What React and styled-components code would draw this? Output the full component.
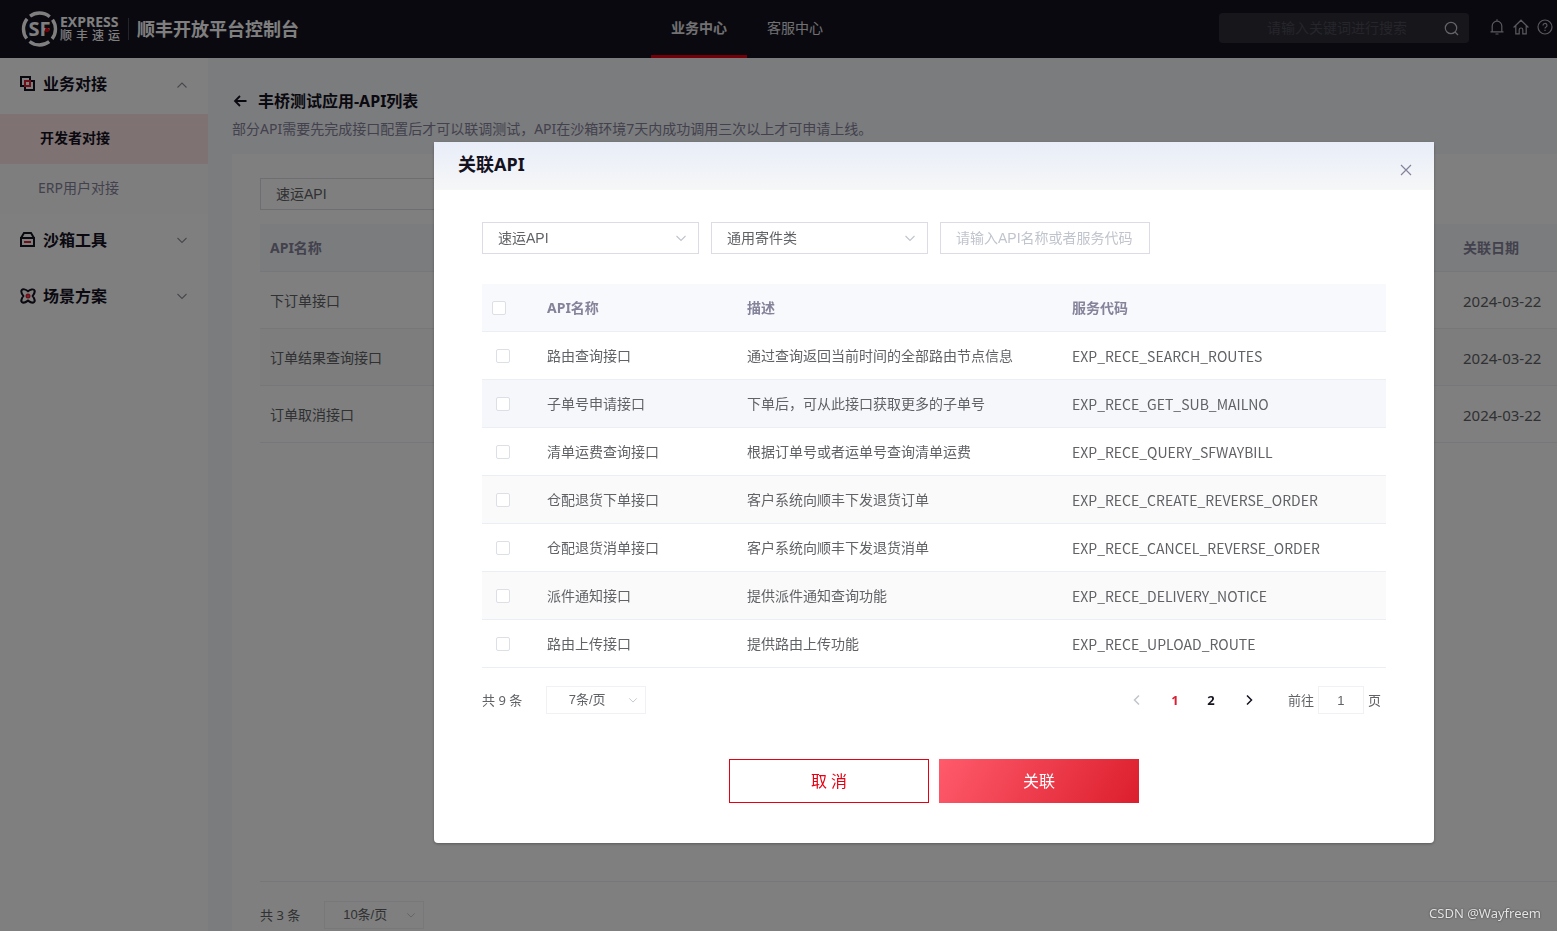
import React from "react";
import styled, { createGlobalStyle, css } from "styled-components";

const sans = `"Noto Sans", "Noto Sans CJK SC", sans-serif`;
const control = `"Liberation Sans", "Noto Sans CJK SC", sans-serif`;

const GlobalStyle = createGlobalStyle`
  *, *::before, *::after { box-sizing: border-box; }
  html, body, #root { height: 100%; }
  body {
    margin: 0;
    overflow: hidden;
    background: #f7f8fc;
    color: #606266;
    font-family: ${sans};
    font-size: 14px;
    line-height: 20px;
  }
  h1, h2, p { margin: 0; }
  button, input, select { font: inherit; color: inherit; margin: 0; border-radius: 0; }
  button { cursor: pointer; }
  a { color: inherit; text-decoration: none; }
`;

/* ---------- page frame ---------- */

const Page = styled.div`
  display: flex;
  flex-direction: column;
  height: 100vh;
`;

const Header = styled.header`
  display: flex;
  align-items: center;
  flex: none;
  height: 58px;
  padding: 0 4px 0 20px;
  background: #14121f;
  color: #fff;
`;

const Brand = styled.a`
  display: flex;
  align-items: center;
  width: 631px;
`;

const BrandWords = styled.span`
  display: flex;
  flex-direction: column;
  width: 60px;
  margin-left: 2px;
`;

const BrandLatin = styled.span`
  font: 700 14px/14px "Open Sans", sans-serif;
`;

const BrandHan = styled.span`
  font-size: 12px;
  font-weight: 500;
  line-height: 14px;
  text-align: justify;
  text-align-last: justify;
`;

const BrandTitle = styled.span`
  margin-left: 8px;
  padding-left: 8px;
  border-left: 1px solid #4a4856;
  font-size: 18px;
  font-weight: 700;
  line-height: 22px;
`;

const Nav = styled.nav`
  display: flex;
  align-self: stretch;
`;

const NavLink = styled.a`
  width: 96px;
  padding-top: 18px;
  border-bottom: 3px solid ${(p) => (p.$active ? "#e60012" : "transparent")};
  color: #e2e2e6;
  font-weight: ${(p) => (p.$active ? 700 : 400)};
  text-align: center;
`;

const HeaderTools = styled.div`
  display: flex;
  align-items: center;
  gap: 8px;
  margin-left: auto;
`;

const SearchBox = styled.label`
  display: flex;
  align-items: center;
  width: 250px;
  height: 30px;
  margin: -2px 12px 0 0;
  padding: 0 10px 0 48px;
  border-radius: 4px;
  background: #2e2d36;
  color: #c9c9cf;

  input {
    flex: 1;
    min-width: 0;
    padding: 0;
    border: 0;
    outline: 0;
    background: none;
    &::placeholder { color: #4b4b56; opacity: 1; }
  }
`;

const ToolButton = styled.button`
  display: flex;
  margin-top: -4px;
  padding: 0;
  border: 0;
  background: none;
  color: #b4b4ba;
`;

const Columns = styled.div`
  display: flex;
  flex: 1;
  min-height: 0;
`;

/* ---------- side menu ---------- */

const Sidebar = styled.aside`
  flex: none;
  width: 208px;
  background: #fff;
`;

const MenuGroup = styled.button`
  display: flex;
  align-items: center;
  width: 100%;
  height: 56px;
  padding: 0 20px 4px;
  border: 0;
  background: none;
  color: #14121f;
  font-size: 16px;
  font-weight: 700;

  span { flex: 1; padding-left: 7px; text-align: left; }
`;

const MenuItem = styled.a`
  display: block;
  height: 50px;
  padding: 14px 0 0 38px;
  background: #fcfcfd;
  color: #84839a;
  ${(p) =>
    p.$active &&
    css`
      padding-left: 40px;
      background: #ffe4e6;
      color: #14121f;
      font-weight: 700;
    `}
`;

/* ---------- content ---------- */

const Main = styled.main`
  display: flex;
  flex: 1;
  flex-direction: column;
  min-width: 0;
  padding: 32px 0 0 24px;
`;

const TitleRow = styled.div`
  display: flex;
  align-items: center;
  gap: 10px;
  color: #14121f;

  h1 { font-size: 16px; line-height: 22px; }
`;

const IconButton = styled.button`
  display: flex;
  padding: 0;
  border: 0;
  background: none;
  color: ${(p) => p.$color || "inherit"};
`;

const Hint = styled.p`
  margin-top: 7px;
  color: #84839a;
`;

const Card = styled.section`
  display: flex;
  flex: 1;
  flex-direction: column;
  margin-top: 15px;
  padding: 24px 0 0 28px;
  background: #fff;
`;

const SelectFrame = styled.span`
  position: relative;
  display: block;
  flex: none;
  width: ${(p) => (p.$small ? 100 : 217)}px;
  height: ${(p) => (p.$small ? 28 : 32)}px;

  select {
    width: 100%;
    height: 100%;
    padding: ${(p) => (p.$small ? "0 18px 0 0" : "0 30px 0 15px")};
    border: 1px solid ${(p) => (p.$small ? "#f0f0f5" : "#dcdce4")};
    outline: 0;
    appearance: none;
    background: #fff;
    font-family: ${control};
    font-size: ${(p) => (p.$small ? 13 : 14)}px;
    text-align: ${(p) => (p.$small ? "center" : "left")};
    text-align-last: ${(p) => (p.$small ? "center" : "left")};
  }

  svg {
    position: absolute;
    top: 50%;
    right: ${(p) => (p.$small ? 8 : 12)}px;
    transform: translateY(-50%);
    pointer-events: none;
  }
`;

const Table = styled.table`
  width: 100%;
  border-collapse: separate;
  border-spacing: 0;
  table-layout: fixed;

  th, td {
    height: ${(p) => p.$row}px;
    padding: 0 10px;
    border-bottom: 1px solid #ebeef5;
    text-align: left;
    white-space: nowrap;
  }
  th {
    height: 48px;
    background: #f7f9fd;
    color: #84839a;
    font-weight: 700;
  }
  tbody tr:nth-child(even) td { background: #fafafa; }
`;

const LinkedTable = styled(Table)`
  margin-top: 14px;

  td { padding-top: 2px; }
`;

const Row = styled.tr`
  &&& td { ${(p) => p.$hovered && "background: #f5f7fb;"} }
`;

const Code = styled.td`
  font-family: "Noto Sans CJK SC", sans-serif;
`;

const DateCell = styled.td`
  font-size: 15px;
`;

const Check = styled.input`
  display: block;
  width: 14px;
  height: 14px;
  margin: 0 0 0 ${(p) => (p.$inset ? 4 : 0)}px;
  border: 1px solid #dcdfe6;
  border-radius: 2px;
  appearance: none;
  background: #fff;
  &:checked { border-color: #dc1e32; background: #dc1e32; }
`;

const CardFooter = styled.div`
  display: flex;
  align-items: center;
  gap: 24px;
  height: 50px;
  margin-top: auto;
  padding-top: 16px;
  border-top: 1px solid #ebeef5;
  font-size: 13px;
`;

/* ---------- dialog ---------- */

const Overlay = styled.div`
  position: fixed;
  inset: 0;
  padding: 142px 123px 0 434px;
  background: rgba(0, 0, 0, 0.5);
`;

const Dialog = styled.div`
  max-width: 1000px;
  padding-bottom: 40px;
  border-radius: 4px;
  background: #fff;
  box-shadow: 0 1px 3px rgba(0, 0, 0, 0.3);
`;

const DialogHead = styled.div`
  display: flex;
  justify-content: space-between;
  align-items: flex-start;
  height: 48px;
  padding: 10px 22px 0 24px;
  background: linear-gradient(180deg, #e8edf8, #f6f7f7);

  h2 { color: #14121f; font-size: 18px; line-height: 24px; }
  button { margin-top: 12px; }
`;

const DialogBody = styled.div`
  padding: 32px 48px 0;
`;

const Filters = styled.div`
  display: flex;
  gap: 12px;
  margin-bottom: 30px;
`;

const TextField = styled.input`
  width: 210px;
  height: 32px;
  padding: 0 15px;
  border: 1px solid #dcdce4;
  outline: 0;
  font-family: ${control};
  &::placeholder { color: #c0c4cc; opacity: 1; }
`;

const Pager = styled.div`
  display: flex;
  align-items: center;
  height: 28px;
  margin-top: 18px;
  font-size: 13px;
`;

const Total = styled.span`
  margin-right: 24px;
`;

const Pages = styled.div`
  display: flex;
  align-items: center;
  margin-left: auto;
`;

const PageButton = styled.button`
  display: flex;
  align-items: center;
  justify-content: center;
  width: ${(p) => (p.$arrow ? 40 : 36)}px;
  height: 28px;
  padding: 0;
  border: 0;
  background: none;
  color: ${(p) => (p.$current ? "#dc1e32" : p.disabled ? "#c0c4cc" : "#14121f")};
  font-family: "Open Sans", sans-serif;
  font-weight: 700;
`;

const Jump = styled.label`
  display: flex;
  align-items: center;
  gap: 4px;
  padding: 0 5px 0 19px;

  input {
    width: 46px;
    height: 28px;
    padding: 0;
    border: 1px solid #f0f0f5;
    outline: 0;
    font-family: ${control};
    text-align: center;
  }
`;

const Actions = styled.div`
  display: flex;
  justify-content: center;
  gap: 10px;
  margin-top: 45px;
`;

const ActionButton = styled.button`
  width: 200px;
  height: 44px;
  padding: 0;
  border: ${(p) => (p.$primary ? "0" : "1px solid #e60012")};
  background: ${(p) => (p.$primary ? "linear-gradient(120deg, #ff5b6b, #dc1e2d)" : "#fff")};
  color: ${(p) => (p.$primary ? "#fff" : "#e60012")};
  font-size: 16px;
`;

const Watermark = styled.span`
  position: fixed;
  right: 16px;
  bottom: 8px;
  color: #e4e4e4;
  font-size: 13px;
  text-shadow: 0 0 2px #333;
`;

/* ---------- drawings ---------- */

const Line = ({ w, h = w, box, children, width = 1 }) => (
  <svg width={w} height={h} viewBox={box || `0 0 ${w} ${h}`} fill="none" stroke="currentColor" strokeWidth={width} aria-hidden="true">
    {children}
  </svg>
);

const Chevron = ({ up, size = 12, color = "#8e909a" }) => (
  <svg width={size} height={size} viewBox="0 0 12 12" fill="none" stroke={color} strokeWidth="1.1" aria-hidden="true">
    <path d={up ? "M1.500 9.500 6 5l4.500 4.500" : "M1.500 4 6 8.500l4.500-4.500"} />
  </svg>
);

const Emblem = () => (
  <svg width="38" height="38" viewBox="0 0 38 38" aria-hidden="true">
    <circle cx="19.500" cy="19" r="16" fill="none" stroke="#fff" strokeWidth="3.400" strokeDasharray="21.130 4" strokeDashoffset="10.570" />
    <text x="8.500" y="26" fill="#fff" fontFamily="Open Sans, sans-serif" fontSize="20" fontWeight="700">SF</text>
    <circle cx="27" cy="20" r="2.200" fill="#e60012" />
  </svg>
);

const SquaresIcon = () => (
  <Line w={16} width={2}>
    <path d="M1 1h9v9H1zM5 5h9v9H5z" />
    <path d="M5 5h5v5H5z" stroke="#dc1e32" />
  </Line>
);

const BoxIcon = () => (
  <Line w={16} width={2}>
    <path d="M1 6h13v8H1zM1 6l3-5h7l3 5" />
    <path d="M4 10h7" stroke="#dc1e32" />
  </Line>
);

const AtomIcon = () => (
  <Line w={16} width={2}>
    <path d="M8 3.200C5.500 1.200 2.800 .8 1.900 1.900s-.5 3.600 1.500 6.100c-2 2.500-2.400 5.200-1.500 6.100s3.600.5 6.100-1.500c2.500 2 5.200 2.400 6.100 1.500s.5-3.600-1.500-6.100c2-2.500 2.400-5.200 1.500-6.100S10.500 1.200 8 3.200z" />
    <circle cx="8" cy="8" r="1.500" stroke="#dc1e32" />
  </Line>
);

const SearchIcon = () => (
  <Line w={15} width={1.2}>
    <circle cx="7" cy="7" r="5.700" />
    <path d="m11 11 3 3" />
  </Line>
);

const BellIcon = () => (
  <Line w={16} width={1.2}>
    <path d="M1.500 12.800h13M3.200 12.500V7a4.800 4.800 0 0 1 9.600 0v5.500M8 2V.3M6.500 15h3" />
  </Line>
);

const HomeIcon = () => (
  <Line w={16} width={1.2}>
    <path d="M.6 8.500 8 1.200l7.400 7.300M2.800 6.600v8.200h3.400v-4a1.800 1.800 0 0 1 3.600 0v4h3.400V6.600" />
  </Line>
);

const HelpIcon = () => (
  <Line w={16} width={1.2}>
    <circle cx="8" cy="8" r="7" />
    <path d="M6 6.500a2 2 0 1 1 2.800 1.800c-.6.300-.8.600-.8 1.300M8 10.800v1.300" />
  </Line>
);

/* ---------- data ---------- */

const linked = ["下订单接口", "订单结果查询接口", "订单取消接口"];

const apis = [
  ["路由查询接口", "通过查询返回当前时间的全部路由节点信息", "EXP_RECE_SEARCH_ROUTES"],
  ["子单号申请接口", "下单后，可从此接口获取更多的子单号", "EXP_RECE_GET_SUB_MAILNO"],
  ["清单运费查询接口", "根据订单号或者运单号查询清单运费", "EXP_RECE_QUERY_SFWAYBILL"],
  ["仓配退货下单接口", "客户系统向顺丰下发退货订单", "EXP_RECE_CREATE_REVERSE_ORDER"],
  ["仓配退货消单接口", "客户系统向顺丰下发退货消单", "EXP_RECE_CANCEL_REVERSE_ORDER"],
  ["派件通知接口", "提供派件通知查询功能", "EXP_RECE_DELIVERY_NOTICE"],
  ["路由上传接口", "提供路由上传功能", "EXP_RECE_UPLOAD_ROUTE"],
];

const Select = ({ label, value, small }) => (
  <SelectFrame $small={small}>
    <select aria-label={label} defaultValue={value}>
      <option>{value}</option>
    </select>
    <Chevron size={small ? 10 : 12} color="#c0c4cc" />
  </SelectFrame>
);

export default function App() {
  return (
    <>
      <GlobalStyle />
      <Page>
        <Header>
          <Brand href="#">
            <Emblem />
            <BrandWords>
              <BrandLatin>EXPRESS</BrandLatin>
              <BrandHan>顺丰速运</BrandHan>
            </BrandWords>
            <BrandTitle>顺丰开放平台控制台</BrandTitle>
          </Brand>
          <Nav>
            <NavLink href="#" $active>业务中心</NavLink>
            <NavLink href="#">客服中心</NavLink>
          </Nav>
          <HeaderTools>
            <SearchBox>
              <input type="text" aria-label="搜索" placeholder="请输入关键词进行搜索" />
              <SearchIcon />
            </SearchBox>
            <ToolButton aria-label="通知"><BellIcon /></ToolButton>
            <ToolButton aria-label="首页"><HomeIcon /></ToolButton>
            <ToolButton aria-label="帮助"><HelpIcon /></ToolButton>
          </HeaderTools>
        </Header>

        <Columns>
          <Sidebar>
            <MenuGroup><SquaresIcon /><span>业务对接</span><Chevron up /></MenuGroup>
            <MenuItem href="#" $active>开发者对接</MenuItem>
            <MenuItem href="#">ERP用户对接</MenuItem>
            <MenuGroup><BoxIcon /><span>沙箱工具</span><Chevron /></MenuGroup>
            <MenuGroup><AtomIcon /><span>场景方案</span><Chevron /></MenuGroup>
          </Sidebar>

          <Main>
            <TitleRow>
              <IconButton aria-label="返回">
                <Line w={16} width={1.8}><path d="M14.500 8H3M8 3 3 8l5 5" /></Line>
              </IconButton>
              <h1>丰桥测试应用-API列表</h1>
            </TitleRow>
            <Hint>部分API需要先完成接口配置后才可以联调测试，API在沙箱环境7天内成功调用三次以上才可申请上线。</Hint>
            <Card>
              <Select label="API类型" value="速运API" />
              <LinkedTable $row={57}>
                <colgroup><col /><col width="104" /></colgroup>
                <thead>
                  <tr><th>API名称</th><th>关联日期</th></tr>
                </thead>
                <tbody>
                  {linked.map((name) => (
                    <tr key={name}><td>{name}</td><DateCell>2024-03-22</DateCell></tr>
                  ))}
                </tbody>
              </LinkedTable>
              <CardFooter>
                <span>共 3 条</span>
                <Select small label="每页条数" value="10条/页" />
              </CardFooter>
            </Card>
          </Main>
        </Columns>
      </Page>

      <Overlay>
        <Dialog role="dialog" aria-modal="true" aria-labelledby="dialog-title">
          <DialogHead>
            <h2 id="dialog-title">关联API</h2>
            <IconButton aria-label="关闭" $color="#84839a">
              <Line w={12} width={1.2}><path d="m1 1 10 10M11 1 1 11" /></Line>
            </IconButton>
          </DialogHead>
          <DialogBody>
            <Filters>
              <Select label="API类型" value="速运API" />
              <Select label="业务类别" value="通用寄件类" />
              <TextField type="text" aria-label="API名称或者服务代码" placeholder="请输入API名称或者服务代码" />
            </Filters>
            <Table $row={48}>
              <colgroup><col width="55" /><col width="200" /><col width="325" /><col /></colgroup>
              <thead>
                <tr>
                  <th><Check type="checkbox" aria-label="全选" /></th>
                  <th>API名称</th>
                  <th>描述</th>
                  <th>服务代码</th>
                </tr>
              </thead>
              <tbody>
                {apis.map(([name, text, code], i) => (
                  <Row key={code} $hovered={i === 1}>
                    <td><Check $inset type="checkbox" aria-label={name} /></td>
                    <td>{name}</td>
                    <td>{text}</td>
                    <Code>{code}</Code>
                  </Row>
                ))}
              </tbody>
            </Table>
            <Pager>
              <Total>共 9 条</Total>
              <Select small label="每页条数" value="7条/页" />
              <Pages>
                <PageButton $arrow disabled aria-label="上一页">
                  <Line w={12} width={1.5}><path d="M8 1.500 3.500 6 8 10.500" /></Line>
                </PageButton>
                <PageButton $current>1</PageButton>
                <PageButton>2</PageButton>
                <PageButton $arrow aria-label="下一页">
                  <Line w={12} width={1.5}><path d="M4 1.500 8.500 6 4 10.500" /></Line>
                </PageButton>
              </Pages>
              <Jump>
                前往
                <input type="text" defaultValue="1" />
                页
              </Jump>
            </Pager>
            <Actions>
              <ActionButton>取 消</ActionButton>
              <ActionButton $primary>关联</ActionButton>
            </Actions>
          </DialogBody>
        </Dialog>
      </Overlay>
      <Watermark>CSDN @Wayfreem</Watermark>
    </>
  );
}
